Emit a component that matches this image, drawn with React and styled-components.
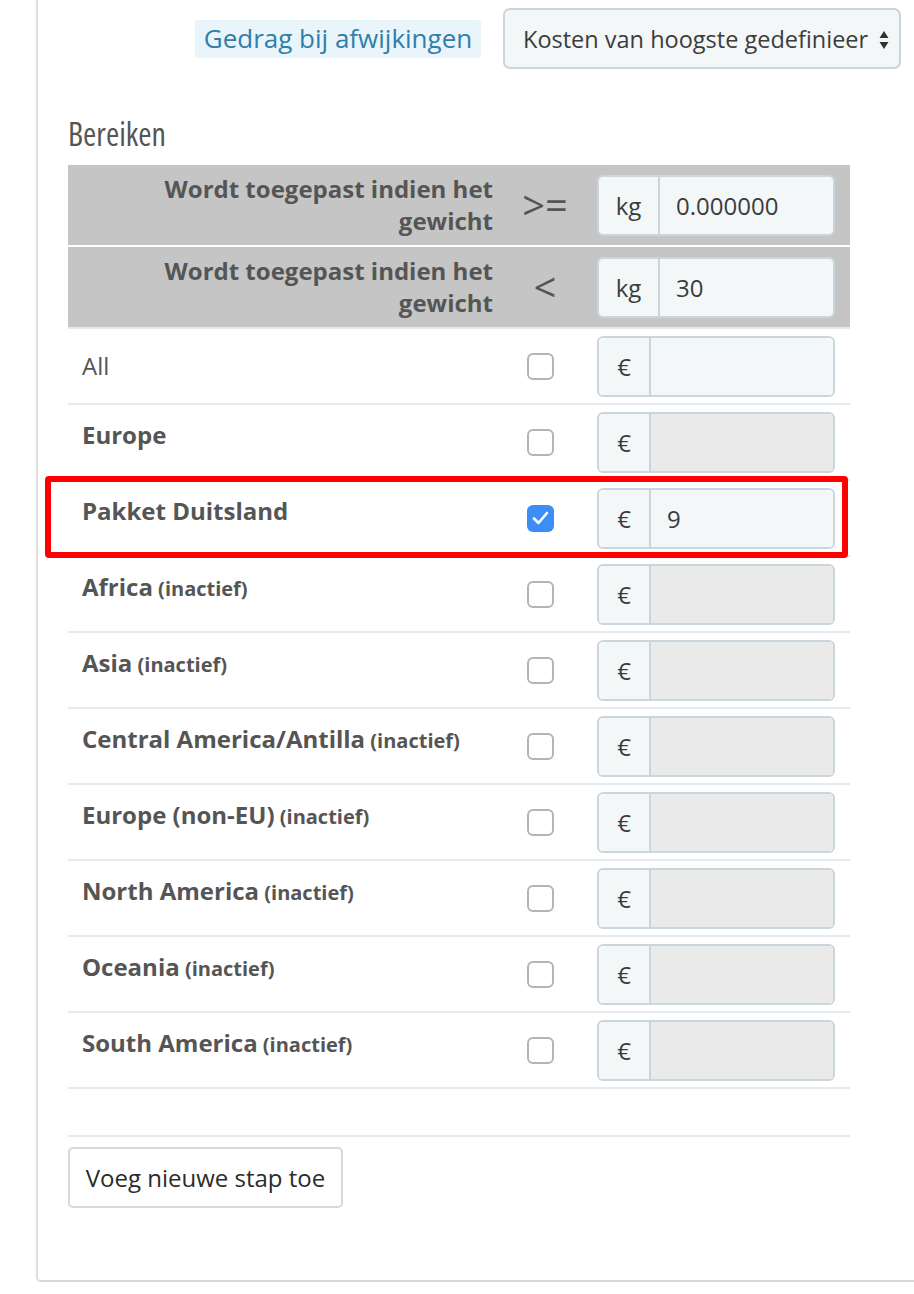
import styled, { createGlobalStyle } from 'styled-components';

const GlobalStyle = createGlobalStyle`
  body {
    margin: 0;
    background: #fff;
    font-family: "Open Sans", "Liberation Sans", sans-serif;
    color: #555;
    overflow: hidden;
  }
`;

const Panel = styled.div`
  margin-left: 36px;
  width: 900px;
  padding: 8px 0 72px 30px;
  border-left: 2px solid #dedede;
  border-bottom: 2px solid #d8d8d8;
  border-bottom-left-radius: 5px;
  box-shadow: 0 2px 2px rgba(0, 0, 0, 0.04);
`;

const FormRow = styled.div`
  display: flex;
  align-items: center;
  gap: 22px;
  padding-left: 127px;
`;

const FieldLabel = styled.span`
  box-sizing: border-box;
  width: 286px;
  flex: none;
  text-align: center;
  padding: 1px 0 2px;
  background: #e9f4fb;
  border-radius: 3px;
  color: #2f7fa9;
  font-size: 26px;
  line-height: 35px;
  font-stretch: 90%;
`;

const Select = styled.div`
  position: relative;
  box-sizing: border-box;
  width: 398px;
  flex: none;
  height: 61px;
  padding: 0 24px 0 18px;
  display: flex;
  align-items: center;
  border: 2px solid #c9d6dd;
  border-radius: 7px;
  background: #f4f7f8;
  color: #3c3c3c;
  font-size: 23.5px;
  font-stretch: 90%;
`;

const SelectText = styled.span`
  white-space: nowrap;
  overflow: hidden;
`;

const Arrows = styled.svg`
  position: absolute;
  right: 10px;
  top: 20px;
`;

const Heading = styled.h3`
  margin: 45px 0 11px;
  font-size: 32px;
  line-height: 40px;
  font-weight: 400;
  font-stretch: 75%;
  color: #555;
`;

const Table = styled.div`
  width: 782px;
`;

const Row = styled.div`
  position: relative;
  display: grid;
  grid-template-columns: 432px 90px 260px;
  align-items: center;
  box-sizing: border-box;
  height: ${p => p.$h || 76}px;
  border-bottom: 2px solid ${p => p.$line || '#e6eaed'};
  background: ${p => p.$bg || 'transparent'};
`;

const HeadLabel = styled.div`
  padding-right: 7px;
  text-align: right;
  font-size: 24px;
  line-height: 32px;
  font-weight: 700;
`;

const Operator = styled.div`
  text-align: center;
  font-size: 40px;
  line-height: 40px;
  font-weight: 500;
`;

const ZoneLabel = styled.div`
  align-self: start;
  padding: ${p => (p.$plain ? 21 : 14)}px 0 0 14px;
  font-size: 24px;
  line-height: 32px;
  font-weight: ${p => (p.$plain ? 400 : 700)};
`;

const Inactive = styled.span`
  font-size: 20px;
`;

const CheckCell = styled.div`
  display: flex;
  justify-content: center;
  padding-right: 10px;
`;

const Checkbox = styled.span`
  box-sizing: border-box;
  width: 27px;
  height: 27px;
  border-radius: 6px;
  border: ${p => (p.$on ? 'none' : '2px solid #b4b4b4')};
  background: ${p => (p.$on ? '#3b8ef6' : '#fff')};
  display: flex;
  align-items: center;
  justify-content: center;
`;

const InputGroup = styled.div`
  box-sizing: border-box;
  margin-left: 7px;
  width: 238px;
  height: 61px;
  display: flex;
  border: 2px solid #c9d6dd;
  border-radius: 6px;
  overflow: hidden;
  font-size: 24px;
  color: #3c3c3c;
`;

const Addon = styled.div`
  width: ${p => p.$w}px;
  flex: none;
  display: flex;
  align-items: center;
  justify-content: center;
  background: #f4f7f8;
  border-right: 2px solid #c9d6dd;
`;

const Field = styled.div`
  flex: 1;
  display: flex;
  align-items: center;
  padding-left: 16px;
  background: ${p => (p.$disabled ? '#eaeaea' : '#f4f7f8')};
`;

const Highlight = styled.div`
  position: absolute;
  left: -23px;
  right: 2px;
  top: -5px;
  bottom: -3px;
  border: 6px solid #ff0000;
  border-radius: 4px;
  pointer-events: none;
`;

const AddButton = styled.button`
  margin-top: 10px;
  box-sizing: border-box;
  width: 275px;
  height: 61px;
  background: #fff;
  border: 2px solid #d9d9d9;
  border-radius: 5px;
  color: #2b2b2b;
  font-family: "Open Sans", "Liberation Sans", sans-serif;
  font-size: 24px;
  font-stretch: 90%;
`;

const zones = [
  { name: 'All', plain: true, disabled: false },
  { name: 'Europe', disabled: true },
  { name: 'Pakket Duitsland', checked: true, value: '9', highlight: true },
  { name: 'Africa', inactive: true, disabled: true },
  { name: 'Asia', inactive: true, disabled: true },
  { name: 'Central America/Antilla', inactive: true, disabled: true },
  { name: 'Europe (non-EU)', inactive: true, disabled: true },
  { name: 'North America', inactive: true, disabled: true },
  { name: 'Oceania', inactive: true, disabled: true },
  { name: 'South America', inactive: true, disabled: true },
];

const Check = () => (
  <svg width="17" height="14" viewBox="0 0 17 14">
    <path d="M2 7.5 L6.5 12 L15 2" fill="none" stroke="#fff" strokeWidth="2.6" strokeLinecap="round" strokeLinejoin="round" />
  </svg>
);

const App = () => (
  <>
    <GlobalStyle />
    <Panel>
      <FormRow>
        <FieldLabel>Gedrag bij afwijkingen</FieldLabel>
        <Select>
          <SelectText>Kosten van hoogste gedefinieer</SelectText>
          <Arrows width="10" height="20" viewBox="0 0 10 20">
            <path d="M5 1 L9.5 8 H0.5 Z M5 19 L9.5 12 H0.5 Z" fill="#333" />
          </Arrows>
        </Select>
      </FormRow>

      <Heading>Bereiken</Heading>

      <Table>
        <Row $h={82} $bg="#c5c5c5" $line="#fff">
          <HeadLabel>Wordt toegepast indien het<br />gewicht</HeadLabel>
          <Operator>&gt;=</Operator>
          <InputGroup>
            <Addon $w={59}>kg</Addon>
            <Field>0.000000</Field>
          </InputGroup>
        </Row>
        <Row $h={82} $bg="#c5c5c5">
          <HeadLabel>Wordt toegepast indien het<br />gewicht</HeadLabel>
          <Operator>&lt;</Operator>
          <InputGroup>
            <Addon $w={59}>kg</Addon>
            <Field>30</Field>
          </InputGroup>
        </Row>

        {zones.map(z => (
          <Row key={z.name}>
            <ZoneLabel $plain={z.plain}>
              {z.name}
              {z.inactive && <Inactive> (inactief)</Inactive>}
            </ZoneLabel>
            <CheckCell>
              <Checkbox $on={z.checked}>{z.checked && <Check />}</Checkbox>
            </CheckCell>
            <InputGroup>
              <Addon $w={50}>€</Addon>
              <Field $disabled={z.disabled}>{z.value}</Field>
            </InputGroup>
            {z.highlight && <Highlight />}
          </Row>
        ))}
        <Row $h={48} />
      </Table>

      <AddButton>Voeg nieuwe stap toe</AddButton>
    </Panel>
  </>
);

export default App;
